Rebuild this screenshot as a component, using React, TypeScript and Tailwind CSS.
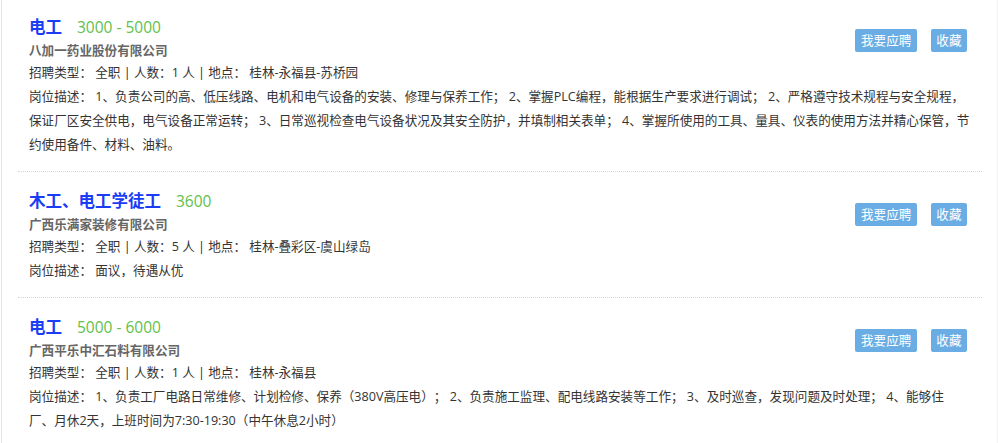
import React from 'react';

type Job = {
  title: string;
  salary: string;
  company: string;
  type: string;
  count: number;
  location: string;
  description: string;
};

const jobs: Job[] = [
  {
    title: '电工',
    salary: '3000 - 5000',
    company: '八加一药业股份有限公司',
    type: '全职',
    count: 1,
    location: '桂林-永福县-苏桥园',
    description:
      '1、负责公司的高、低压线路、电机和电气设备的安装、修理与保养工作； 2、掌握PLC编程，能根据生产要求进行调试； 2、严格遵守技术规程与安全规程，保证厂区安全供电，电气设备正常运转； 3、日常巡视检查电气设备状况及其安全防护，并填制相关表单； 4、掌握所使用的工具、量具、仪表的使用方法并精心保管，节约使用备件、材料、油料。',
  },
  {
    title: '木工、电工学徒工',
    salary: '3600',
    company: '广西乐满家装修有限公司',
    type: '全职',
    count: 5,
    location: '桂林-叠彩区-虞山绿岛',
    description: '面议，待遇从优',
  },
  {
    title: '电工',
    salary: '5000 - 6000',
    company: '广西平乐中汇石料有限公司',
    type: '全职',
    count: 1,
    location: '桂林-永福县',
    description:
      '1、负责工厂电路日常维修、计划检修、保养（380V高压电）； 2、负责施工监理、配电线路安装等工作； 3、及时巡查，发现问题及时处理； 4、能够住\n厂、月休2天，上班时间为7:30-19:30（中午休息2小时）',
  },
];

const JobCard = ({ job, first }: { job: Job; first: boolean }) => (
  <div className={`pr-[11px] pb-[14px] pl-[11px] ${first ? 'pt-[11px]' : 'border-t border-dotted border-[#d6d6d6] pt-[13px]'}`}>
    <div className="flex items-start justify-between">
      <div>
        <div className="flex h-[30px] items-center pt-[3px]">
          <span className="text-[16.5px] font-bold text-[#1a3cf4]">{job.title}</span>
          <span className="ml-[15px] text-[15.5px] text-[#62bf4c]">{job.salary}</span>
        </div>
        <div className="h-[20px] leading-[20px] font-bold text-[#666]">{job.company}</div>
      </div>
      <div className="mt-[18px] mr-[4px] flex gap-[14px]">
        <button type="button" className="h-[23px] rounded-[2px] bg-[#6aade4] px-[5.5px] leading-[23px] text-white">
          我要应聘
        </button>
        <button type="button" className="h-[23px] rounded-[2px] bg-[#6aade4] px-[5.5px] leading-[23px] text-white">
          收藏
        </button>
      </div>
    </div>
    <div className="leading-[24px] text-[#333]">
      招聘类型： 全职 <span className="text-[#223]">|</span> 人数：{job.count} 人 <span className="text-[#223]">|</span> 地点： {job.location}
    </div>
    <div className="leading-[24px] whitespace-pre-line text-[#333]">岗位描述： {job.description}</div>
  </div>
);

export default function App() {
  return (
    <div
      className="min-h-[443px] w-[998px] bg-white text-[12.6px] [text-spacing-trim:space-all]"
      style={{ fontFamily: '"Open Sans", "Noto Sans CJK SC", sans-serif' }}
    >
      <div className="ml-px min-h-[443px] border-x border-l-[#e4e4e4] border-r-[#f2f2f2] pr-[15px] pl-[16px]">
        {jobs.map((job, i) => (
          <JobCard key={i} job={job} first={i === 0} />
        ))}
      </div>
    </div>
  );
}
